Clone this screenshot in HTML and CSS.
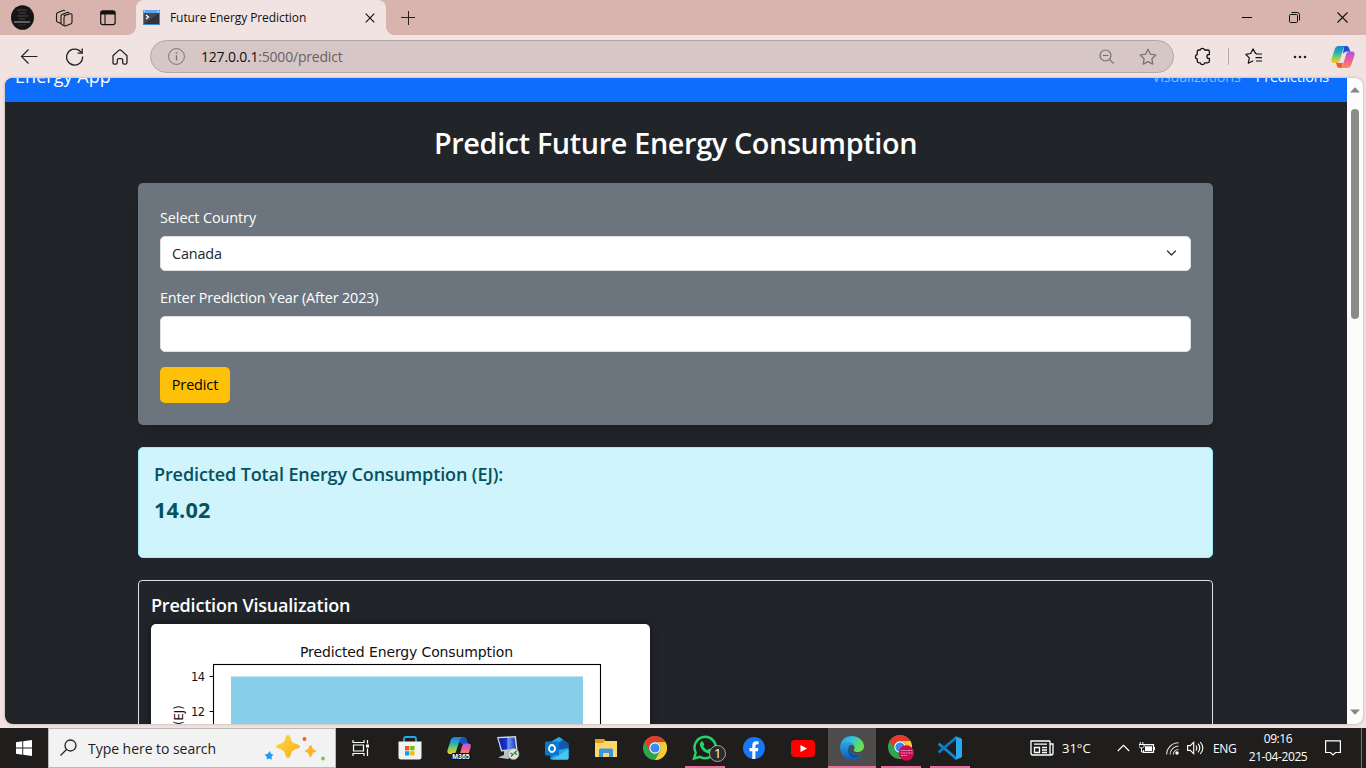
FILE: index.html
```html
<!DOCTYPE html>
<html lang="en">
<head>
<meta charset="utf-8">
<title>Future Energy Prediction</title>
<link rel="stylesheet" href="styles.css">
</head>
<body>
<svg class="defs" width="0" height="0" aria-hidden="true">
  <defs>
    <linearGradient id="coA" x1="0" y1="0" x2="0" y2="1"><stop offset="0" stop-color="#1683dd"/><stop offset=".4" stop-color="#28b4b5"/><stop offset=".7" stop-color="#8ed052"/><stop offset="1" stop-color="#ffc526"/></linearGradient>
    <linearGradient id="coB" x1="0" y1="0" x2="0" y2="1"><stop offset="0" stop-color="#a45cf0"/><stop offset=".5" stop-color="#ee5b9c"/><stop offset="1" stop-color="#ff8a53"/></linearGradient>
    <linearGradient id="edgeA" x1="0" y1="0" x2="1" y2=".4"><stop offset="0" stop-color="#1b9de0"/><stop offset=".5" stop-color="#32c4da"/><stop offset="1" stop-color="#6be04c"/></linearGradient>
    <linearGradient id="edgeB" x1="0" y1="0" x2="0" y2="1"><stop offset="0" stop-color="#2aa9e4"/><stop offset="1" stop-color="#1158b2"/></linearGradient>
    <linearGradient id="starG" x1="0" y1="0" x2="1" y2="1"><stop offset="0" stop-color="#ffd94a"/><stop offset="1" stop-color="#f8ac14"/></linearGradient>
    <linearGradient id="monG" x1="0" y1="0" x2="1" y2="0"><stop offset="0" stop-color="#0a1eb0"/><stop offset=".45" stop-color="#1a35c8"/><stop offset=".55" stop-color="#6f9af2"/><stop offset="1" stop-color="#1a3ac8"/></linearGradient>
    <symbol id="copilot" viewBox="0 0 24 22">
      <path d="M13 0h2.500c1.500 0 2.300.9 2.700 2.400L19.300 6h-2.600c-2 0-2.900.8-3.500 2.700l-2 6z" fill="#1f4fd0"/>
      <path d="M7.500 0H15c-1.500 0-2.200 1-2.800 3L9 14.500c-.5 1.600-1.500 2.500-3.200 2.500H3C.5 17 0 15 .5 13.200L3.600 3.500C4.300 1.200 5.500 0 7.500 0z" fill="url(#coA)"/>
      <path d="M11 22H8.500c-1.500 0-2.300-.9-2.700-2.400L4.900 16.800h2.600c2 0 2.700-1 3.300-2.900l2-6z" fill="#ee5a30"/>
      <path d="M16.500 22H9c1.500 0 2.200-1 2.800-3L15 8c.5-1.600 1.500-2.500 3.200-2.500H21c2.500 0 3 2 2.500 3.800l-3.100 9.200C19.700 20.800 18.500 22 16.500 22z" fill="url(#coB)"/>
      <path class="copilot-gap" d="M13.200 6.800q.5-1.300 2.600-1.300h2.400Q15.800 5.700 15 8l-2.300 7.700q-.5 1.300-2.700 1.300H6Q8.200 17 9 14.500l1.700-5.700z"/>
    </symbol>
    <symbol id="copilot-m365" viewBox="0 0 24 22">
      <path d="M14 0h3q2 0 2.700 2.500L21 7h-6l-3-2z" fill="#1b4fc8"/>
      <path d="M7.500 0H16q-2.500.5-3.400 3.500L9 14.500C8.500 16.100 7.500 17 5.800 17H3C.5 17 0 15 .5 13.200L3.600 3.500C4.300 1.200 5.500 0 7.500 0z" fill="url(#coA)"/>
      <path d="M16.500 6.500H21q3.500 0 2.700 3.500L21.500 17H13l2-8z" fill="url(#coB)"/>
    </symbol>
    <symbol id="chrome" viewBox="0 0 24 24">
      <circle cx="12" cy="12" r="12" fill="#2da44e"/>
      <path d="M1.600 6a12 12 0 0 1 20.800 0H12a6 6 0 0 0-5.200 9z" fill="#e33b2e"/>
      <path d="M22.400 6A12 12 0 0 1 12 24l5.200-9A6 6 0 0 0 12 6z" fill="#fcc934"/>
      <circle cx="12" cy="12" r="5.700" fill="#fff"/><circle cx="12" cy="12" r="4.600" fill="#4285f4"/>
    </symbol>
  </defs>
</svg>

<div class="screen">
  <header class="tabstrip">
    <svg class="avatar" width="24" height="26" viewBox="0 0 24 26"><ellipse cx="12.500" cy="12.500" rx="11.500" ry="12.300" fill="#151515"/><path d="M7 5h10M9 8h7M7 11h11M9 14h6" stroke="#484848" stroke-width="1"/><path d="M4 17h16" stroke="#8a8a8a" stroke-width="1.300"/><path d="M8 20h8" stroke="#333"/></svg>
    <svg class="workspaces" width="18" height="18" viewBox="0 0 18 18" fill="none" stroke="#1a1a1a" stroke-width="1.100" stroke-linejoin="round"><path d="M8.600 6.600 15.500 4.800q1.500-.4 1.500 1.200v7q0 1.200-1 1.700l-5.500 2.200q-1.500.4-1.500-1V8.800q0-1 1-1.300"/><path d="M9 16.500l-2-.8q-1-.4-1-1.600V7.200q0-1.300 1-1.700l5-2q1.500-.4 2 .8"/><path d="M6 14.500l-3.500-1.500q-1-.5-1-1.500V5.500q0-1.300 1-1.700l5.500-2.400q1.200-.4 1.800.7"/></svg>
    <svg class="vertical-tabs" width="16" height="16" viewBox="0 0 16 16" fill="none"><rect x=".7" y=".9" width="14.400" height="13.800" rx="2.200" stroke="#111" stroke-width="1.200"/><path d="M.7 4.500V3Q.7.9 3 .9h10q2.100 0 2.100 2.100v1.500z" fill="#111"/><path d="M5 4v10.500" stroke="#111" stroke-width="1.100"/></svg>
    <div class="tab">
      <svg width="17" height="15" viewBox="0 0 17 15"><rect width="17" height="15" fill="#4285cc"/><rect width="17" height="3" fill="#5fa5ef"/><path d="M1 1.500h1m12 0h2" stroke="#c9ddfa"/><rect x="1" y="3" width="15" height="11" fill="#303338"/><path d="M1 14V3h15z" fill="#474a50"/><path d="m3 5 2.500 2L3 9" fill="none" stroke="#fff" stroke-width="1.300"/></svg>
      <span class="tab-title">Future Energy Prediction</span>
      <svg class="tab-close" width="10" height="10" viewBox="0 0 10 10"><path d="m.7.7 8.600 8.600M9.300.7.700 9.300" stroke="#111" stroke-width="1.200"/></svg>
    </div>
    <svg class="new-tab" width="14" height="14" viewBox="0 0 14 14"><path d="M7.500 0v14M0 6.500h14" stroke="#222"/></svg>
    <div class="window-buttons">
      <svg width="10" height="12" viewBox="0 0 10 12"><path d="M0 5.500h10" stroke="#000"/></svg>
      <svg width="11" height="11" viewBox="0 0 11 11" fill="none" stroke="#111"><rect x=".5" y="2.500" width="8" height="8" rx="1.200"/><path d="M2.500.5H8.200q2.300 0 2.300 2.300v5.700"/></svg>
      <svg width="11" height="11" viewBox="0 0 11 11"><path d="m.5.5 10 10m0-10-10 10" stroke="#111" stroke-width="1.100"/></svg>
    </div>
  </header>

  <div class="toolbar">
    <div class="nav-icons">
      <svg width="18" height="16" viewBox="0 0 18 16" fill="none" stroke="#222" stroke-width="1.200"><path d="M17.500 7.500H1.700M8.500 .5l-7 7 7 7"/></svg>
      <svg width="18" height="18" viewBox="0 0 18 18" fill="none" stroke="#222" stroke-width="1.300"><path d="M16.600 8.500A8 8 0 1 1 13 2.400l3 2.300"/><path d="M16.200.5v4.600h-4.600"/></svg>
      <svg width="16" height="16" viewBox="0 0 16 16" fill="none" stroke="#222" stroke-width="1.300" stroke-linejoin="round"><path d="M1 6.800 6.700 1.400q1.300-1.100 2.600 0L15 6.800v6.700q0 1.700-1.700 1.700h-1.100q-1.500 0-1.500-1.600v-2.400q0-1.500-1.400-1.500H6.700q-1.400 0-1.400 1.500v2.400q0 1.600-1.500 1.600H2.700Q1 15.200 1 13.500z"/></svg>
    </div>
    <div class="address">
      <svg width="17" height="17" viewBox="0 0 17 17" fill="none" stroke="#777071"><circle cx="8.500" cy="8.500" r="7.900"/><path d="M8.500 7.300V12.500" stroke-width="1.300"/><path d="M8.500 4.300v1.400" stroke-width="1.500"/></svg>
      <span class="url">127.0.0.1<span>:5000/predict</span></span>
      <svg class="zoom-icon" width="16" height="16" viewBox="0 0 16 16" fill="none" stroke="#777071" stroke-width="1.200"><circle cx="6.500" cy="6.500" r="5.500"/><path d="M3.700 6.500h5.600M10.500 10.500l4.200 4.200"/></svg>
      <svg width="18" height="18" viewBox="0 0 18 18" fill="none" stroke="#777071" stroke-width="1.200" stroke-linejoin="round"><path d="m9 1.300 2.400 4.900 5.400.8-3.900 3.800.9 5.300L9 13.600l-4.800 2.500.9-5.300L1.200 7l5.400-.8z"/></svg>
    </div>
    <div class="extensions">
      <svg width="18" height="19" viewBox="0 0 18 19" fill="none" stroke="#111" stroke-width="1.300" stroke-linejoin="round"><path d="M6.200 3a2.300 2.300 0 0 1 4.400 0h3q1.800 0 1.800 1.800v2.700h-.6a1.900 1.900 0 0 0 0 3.800h.6v2.800q0 1.800-1.800 1.800h-3a2.200 2.200 0 0 1-4.300 0H5Q3.200 15.900 3.200 14.100V12A2.300 2.300 0 0 1 3.200 7.500V4.800Q3.200 3 5 3z"/></svg>
      <i class="divider"></i>
      <svg width="18" height="17" viewBox="0 0 18 17" fill="none" stroke="#111" stroke-width="1.200" stroke-linejoin="round"><path d="m11.700 5.500-1.200-.1L8 .9 5.700 5.500.8 6.300l3.500 3.500-1 5.400 5-2.400"/><path d="M11 6h6M10.500 9.600H17M11 13h6"/></svg>
      <svg width="14" height="4" viewBox="0 0 14 4" fill="#222"><circle cx="2" cy="2" r="1.300"/><circle cx="7" cy="2" r="1.300"/><circle cx="12" cy="2" r="1.300"/></svg>
      <svg width="24" height="22"><use href="#copilot"/></svg>
    </div>
  </div>

  <div class="viewport">
    <div class="page">
      <nav class="navbar">
        <span class="brand">Energy App</span>
        <span class="nav-link">Visualizations</span>
        <span class="nav-link active">Predictions</span>
      </nav>
      <main class="container">
        <h2>Predict Future Energy Consumption</h2>
        <form class="form-card">
          <label class="label-country">Select Country</label>
          <div class="select"><span>Canada</span><svg width="11" height="7" viewBox="0 0 11 7" fill="none" stroke="#343a40" stroke-width="1.400" stroke-linecap="round"><path d="m1.500 1 4 4 4-4"/></svg></div>
          <label class="label-year">Enter Prediction Year (After 2023)</label>
          <input class="year" type="text">
          <button class="predict" type="button">Predict</button>
        </form>
        <section class="alert">
          <h4>Predicted Total Energy Consumption (EJ):</h4>
          <p>14.02</p>
        </section>
        <section class="chart-card">
          <h4>Prediction Visualization</h4>
          <svg class="chart" width="499" height="374" viewBox="0 0 499 374">
            <rect width="499" height="374" fill="#fff"/>
            <rect x="80" y="52.500" width="352" height="290" fill="#87ceeb"/>
            <rect x="62.500" y="40.500" width="387" height="302" fill="none" stroke="#000" stroke-width="1.100"/>
            <path d="M58.500 52.500h4M58.500 87.500h4" stroke="#000" stroke-width="1.100"/>
            <text class="chart-title" x="149" y="33" textLength="213">Predicted Energy Consumption</text>
            <text class="tick" x="40" y="57" textLength="14">14</text>
            <text class="tick" x="40" y="92" textLength="14">12</text>
            <text class="axis" transform="translate(32 101) rotate(-90)">(EJ)</text>
          </svg>
        </section>
      </main>
    </div>
    <div class="scrollbar">
      <svg width="10" height="6" viewBox="0 0 10 6"><path d="M5 .3 10 5.500H0z" fill="#858585"/></svg>
      <div class="track"><div class="thumb"></div></div>
      <svg width="10" height="6" viewBox="0 0 10 6"><path d="M5 5.700 10 .5H0z" fill="#858585"/></svg>
    </div>
  </div>

  <footer class="taskbar">
    <div class="start"><svg width="16" height="16" viewBox="0 0 16 16" fill="#fff"><path d="M0 2.200 6.300 1.300V7.500H0zM7.200 1.200 16 0v7.500H7.200zM0 8.400h6.300v6.300L0 13.800zM7.200 8.400H16V16l-8.800-1.200z"/></svg></div>
    <div class="search">
      <svg width="18" height="18" viewBox="0 0 18 18" fill="none" stroke="#222" stroke-width="1.300"><circle cx="10.500" cy="6.500" r="5.500"/><path d="M6.500 10.500.5 16.500"/></svg>
      <span>Type here to search</span>
      <svg class="sparkles" width="62" height="28" viewBox="0 0 62 28"><path d="M24 1q2 0 3 4.500 1 3.500 5 4.500 4 1 4 2.500t-4 2.500q-4 1-5 4.500-1 4.500-3 4.500t-3-4.500q-1-3.500-5-4.500-4-1-4-2.500t4-2.500q4-1 5-4.500Q22 1 24 1z" fill="url(#starG)"/><path d="M46.500 11q1.200 0 1.700 2.500.6 1.700 2.300 2.200 1.700.5 1.700 1.300t-1.700 1.300q-1.700.5-2.300 2.200-.5 2.500-1.700 2.500t-1.700-2.500q-.6-1.700-2.300-2.200-1.700-.5-1.700-1.300t1.700-1.300q1.700-.5 2.300-2.200.5-2.500 1.700-2.500z" fill="#fbb62a"/><path d="m6 17 .8 2.700 2.700.8-2 2 .5 2.900-2.700-.8-2.300 1-.3-2.800L.5 20.500l3-.6z" fill="#199ef0"/><circle cx="40.500" cy="5" r="2" fill="#ef6530"/><circle cx="59" cy="24.500" r="2" fill="#87c44b"/></svg>
    </div>
    <div class="apps">
      <div class="app"><svg width="18" height="18" viewBox="0 0 18 18" fill="none" stroke="#fff" stroke-width="1.200"><path d="M1 1v2.500h11V1M1 17v-2.500h11V17M1.500 6h10v6h-10zM15.500 1v3.500m0 5V17"/><path d="M14 5.500h3v3h-3z" fill="#fff" stroke="none"/></svg></div>
      <div class="app"><svg width="24" height="24" viewBox="0 0 24 24"><path d="M6 7V3q0-2 2-2h8q2 0 2 2v4" fill="none" stroke="#27a8e0" stroke-width="1.800"/><path d="M.5 5.500h23V21q0 2.500-2.500 2.500H3Q.5 23.500.5 21z" fill="#f3f3f3"/><path d="M7 10h4.300v4.300H7z" fill="#f25022"/><path d="M12.200 10h4.300v4.300h-4.300z" fill="#7fba00"/><path d="M7 15.200h4.300v4.300H7z" fill="#00a4ef"/><path d="M12.200 15.200h4.300v4.300h-4.300z" fill="#ffb900"/></svg></div>
      <div class="app m365"><svg width="24" height="22"><use href="#copilot-m365"/></svg><span>M365</span></div>
      <div class="app"><svg width="24" height="26" viewBox="0 0 24 26"><path d="m1 2 19-1 1.500 14L5 16.500z" fill="#d6dae0"/><path d="m2.500 3.300 16.200-.9 1.300 11.300L6 15z" fill="url(#monG)"/><path d="m8 16 5-1 1 4 3 1.500-5 3.500-10-1.500 6-2.500z" fill="#bcc2c8"/><circle cx="17.500" cy="19" r="5.500" fill="#e0e3e0" stroke="#8d9593" stroke-width=".7"/><path d="m14.500 18 2.500 1.500-2 2M20.500 16l-2 2 2.500 1.500" fill="none" stroke="#26843a" stroke-width="1.400"/></svg></div>
      <div class="app"><svg width="24" height="24" viewBox="0 0 24 24"><path d="M4 7 14 1l9.500 6.500V22q0 1.500-1.500 1.500H7Q5 23.500 5 21.500z" fill="#0f6ab9"/><path d="M4 7 14 1l4 2.500-10 7z" fill="#2fa5e4"/><path d="m14 8 5-4 4.500 3.500v5L16 17z" fill="#1459a6"/><path d="m5 23 9-9 9.500-2V22q0 1.500-1.500 1.500H7z" fill="#28a8ea"/><path d="m7 23.500 16.500-10V22q0 1.500-1.500 1.500z" fill="#46c8ef"/><rect y="5.500" width="14" height="14" rx="1.200" fill="#0878d3"/><ellipse cx="7" cy="12.500" rx="3" ry="3.500" fill="none" stroke="#fff" stroke-width="1.800"/></svg></div>
      <div class="app"><svg width="22" height="20" viewBox="0 0 22 20"><path d="M0 1h9l1.500 2H22v16H0z" fill="#dfa11b"/><path d="M0 5h8l2-2h12v16H0z" fill="#ffd767"/><path d="M4 19v-7q0-1.500 1.500-1.500h11q1.500 0 1.500 1.500v7h-4v-4H8v4z" fill="#3d95db"/></svg></div>
      <div class="app"><svg width="24" height="24"><use href="#chrome"/></svg></div>
      <div class="app running"><svg class="whatsapp" width="34" height="28" viewBox="0 0 34 28"><path d="m2 24.500 1.700-6A10.700 10.700 0 1 1 8 22.900z" fill="#1f1e1d" stroke="#25d366" stroke-width="2.400"/><path d="M9 7.800q1.200-1.200 2 0l1.200 2.400q.3.700-1 2 1.500 2.700 4.400 3.800 1.200-1.600 1.900-1.200l2.300 1.200q.8.300.2 1.700-1 2.200-3.800 1.700-6.300-1.600-8.300-7.900-.3-2.200 1.100-3.700z" fill="#25d366"/><circle cx="25.500" cy="19.500" r="8" fill="#2c2b29" stroke="#a6a6a6"/><text class="badge-number" x="22" y="24">1</text></svg></div>
      <div class="app"><svg width="22" height="22" viewBox="0 0 22 22"><circle cx="11" cy="11" r="11" fill="#1877f2"/><path d="M9.300 22v-7.800H6.500V11h2.800V8.600q0-4.300 4.100-4.300l2.200.2v2.800H14q-1.600 0-1.600 1.600V11h3l-.5 3.200h-2.500V22z" fill="#fff"/></svg></div>
      <div class="app"><svg width="24" height="17" viewBox="0 0 24 17"><rect width="24" height="17" rx="4" fill="#f00"/><path d="m9.500 5 6.500 3.500L9.500 12z" fill="#fff"/></svg></div>
      <div class="app running current"><svg width="24" height="24" viewBox="0 0 24 24"><path d="M0 12Q1 0 12 0q10 .5 12 9.500.3 6-6 6.500-5 0-4-2.500 2-3-2-5Q6 6 0 12z" fill="url(#edgeA)"/><path d="M0 12q1-6.500 7.500-6.500Q14 6 14.700 11q-.2-2.800-3.200-2.200-3.500 1.700-2 6Q12 20 20 18.500q2-.7 1.700.3Q18 24 11.800 24 1 23 0 12z" fill="url(#edgeB)"/><path d="M9 10q-3 7 2.500 11 4.500 2.500 9.500-2.500-8 2.500-11-2.500-1.700-3.500.5-6.500z" fill="#0c4ea5"/></svg></div>
      <div class="app running"><svg width="26" height="26" viewBox="0 0 26 26"><svg width="24" height="24"><use href="#chrome"/></svg><circle cx="18.300" cy="18" r="7.700" fill="#c80d55"/><path d="M12.500 15.500h12M12.500 18h12M13 20.500h6" stroke="#e88bac" stroke-width="1.200" stroke-dasharray="2 .5"/></svg></div>
      <div class="app running"><svg width="24" height="24" viewBox="0 0 24 24"><path d="M1.500 6.500 18 20.500V24L.3 9.200Q-.3 8.500.4 7.800z" fill="#1783c9"/><path d="M1.500 17.500 18 3.500V0L.3 14.800q-.6.700.1 1.400z" fill="#087bc5"/><path d="m17 0 5.800 2.300q1.200.5 1.200 1.700v16q0 1.200-1.200 1.700L17 24q1-.5 1-2V2q0-1.500-1-2z" fill="#29a8f2"/></svg></div>
    </div>
    <div class="tray">
      <svg class="news" width="24" height="16" viewBox="0 0 24 16" fill="none" stroke="#fff" stroke-width="1.300"><path d="M20 1H1v12q0 2 2 2h18q2 0 2-2V4h-3v9q0 1.500 1.500 1.500M20 1v4"/><path d="M4 4.200h13M12 7.500h5M12 10h5M12 12.500h5"/><path d="M4.500 7.500h5v5h-5z"/></svg>
      <span class="temp">31°C</span>
      <svg class="chevron" width="13" height="8" viewBox="0 0 13 8"><path d="m.8 7 5.700-5.700L12.200 7" fill="none" stroke="#fff" stroke-width="1.200"/></svg>
      <svg class="battery" width="16" height="12" viewBox="0 0 16 12"><path d="M5 2.700h9.500v7.600H4.500V8" fill="none" stroke="#fff" stroke-width="1.200"/><path d="M6 4.200h7V9H6zM15 5h1v3h-1z" fill="#fff"/><path d="M1.200 0v2M3.800 0v2M0 2.500h5V4.500L3.500 6h-2L0 4.500zM2.500 6v4H5" stroke="#fff" fill="none"/></svg>
      <svg class="wifi" width="13" height="13" viewBox="0 0 13 13" fill="none" stroke="#ddd" stroke-width="1.100"><path d="M.6 12.500A12 12 0 0 1 12.500.8M4 12.500A8.700 8.700 0 0 1 12.500 4M7.200 12.500a5.500 5.500 0 0 1 5.300-5"/><circle cx="11" cy="11" r="1.700" fill="#fff" stroke="none"/></svg>
      <svg class="volume" width="17" height="14" viewBox="0 0 17 14" fill="none" stroke="#fff" stroke-width="1.100"><path d="M.6 4.600h2.700L6.700 1.300v11.400L3.300 9.400H.6zM8.800 4.500q2 2.500 0 5M11 2.700q3.500 4.300 0 8.600M13.300 1q5 6 0 12"/></svg>
      <span class="lang">ENG</span>
      <div class="clock"><span>09:16</span><span>21-04-2025</span></div>
      <svg class="notify" width="16" height="16" viewBox="0 0 16 16" fill="none" stroke="#fff" stroke-width="1.200"><path d="M.6.8h14.800v11.700H10.500L8 15l-2.500-2.500H.6z"/></svg>
      <i class="desktop-edge"></i>
    </div>
  </footer>
</div>
</body>
</html>
```
FILE: styles.css
```css
* { box-sizing: border-box; }
body { margin: 0; overflow: hidden; font-family: "Open Sans", "Noto Sans", sans-serif; }
svg { display: block; flex: none; }
.defs { position: absolute; }
h2, h4, p { margin: 0; }
span, h2, h4, p, label, button { white-space: nowrap; }
.screen { width: 1366px; height: 768px; display: flex; flex-direction: column; background: #f1e3e1; }

.tabstrip { height: 35px; flex: none; display: flex; align-items: center; background: #d9b3ad; }
.avatar { margin-left: 10px; }
.workspaces { margin-left: 21px; }
.vertical-tabs { margin-left: 27px; }
.tab { width: 250px; height: 35px; margin-left: 20px; padding: 0 11px 0 7px; display: flex; align-items: center; background: #f1e3e1; border-radius: 8px 8px 0 0; position: relative; }
.tab::before, .tab::after { content: ""; position: absolute; bottom: 0; width: 8px; height: 8px; }
.tab::before { left: -8px; background: radial-gradient(circle at 0 0, #d9b3ad 7.5px, #f1e3e1 8px); }
.tab::after { right: -8px; background: radial-gradient(circle at 100% 0, #d9b3ad 7.5px, #f1e3e1 8px); }
.tab-title { margin-left: 10px; font-size: 12px; letter-spacing: -.08px; color: #111; }
.tab-close { margin-left: auto; }
.new-tab { margin-left: 15px; }
.window-buttons { margin-left: auto; padding-right: 18px; display: flex; align-items: center; gap: 37px; }

.toolbar { height: 43px; flex: none; display: flex; align-items: center; }
.nav-icons { display: flex; align-items: center; width: 150px; padding-left: 20px; gap: 28px; }
.address { width: 1024px; height: 33px; display: flex; align-items: center; padding: 0 16px 0 17px; border: 1px solid #b5a5a4; border-radius: 17px; background: #d6c7c6; }
.url { margin-left: 16px; font-size: 14px; letter-spacing: -.2px; color: #111; }
.url span { color: #696263; }
.zoom-icon { margin-left: auto; margin-right: 24px; }
.extensions { flex: 1; display: flex; align-items: center; padding-left: 20px; }
.divider { width: 1px; height: 17px; margin: 0 16px; background: #b7a9a8; }
.extensions svg:nth-of-type(3) { margin: 0 24px 0 30px; }
.copilot-gap { fill: #f1e3e1; }

.viewport { width: 1358px; height: 646px; flex: none; margin-left: 5px; display: flex; overflow: hidden; border-radius: 8px; background: #fcfcfc; box-shadow: 0 0 3px #b9a5a3; }
.page { width: 1342px; height: 646px; overflow: hidden; background: #212529; }
.navbar { height: 51px; margin-top: -27px; padding: 0 18px 0 10px; display: flex; align-items: center; background: #0d6efd; color: #fff; }
.brand { margin-right: auto; padding-bottom: 2px; font-size: 18px; letter-spacing: .05px; }
.nav-link { font-size: 14.4px; letter-spacing: -.16px; margin-left: 15px; color: #86b7fe; }
.nav-link.active { color: #fff; }
.container { width: 1075px; margin-left: 133px; }
h2 { height: 81px; line-height: 81px; text-align: center; color: #fff; font-size: 28.8px; font-weight: 600; letter-spacing: -.36px; }
.form-card { height: 242px; padding: 22px; display: flex; flex-direction: column; align-items: stretch; background: #6c757d; border-radius: 5px; box-shadow: 0 7px 14px rgba(0,0,0,.15); color: #fff; }
.form-card label { height: 31px; line-height: 25px; font-size: 14.4px; letter-spacing: -.15px; }
.form-card .label-country { letter-spacing: -.07px; }
.label-year { margin-top: 14px; }
.select { height: 35px; padding: 0 13px 0 11px; display: flex; align-items: center; justify-content: space-between; background: #fff; border: 1px solid #dee2e6; border-radius: 5px; color: #212529; font-size: 14.4px; letter-spacing: -.15px; }
.year { height: 36px; border: 1px solid #dee2e6; border-radius: 5px; background: #fff; }
.predict { width: 70px; height: 36px; margin-top: 15px; padding: 0 0 2px; border: 0; border-radius: 5px; background: #ffc107; color: #000; font: 14.4px "Open Sans", sans-serif; letter-spacing: -.1px; }
.alert { height: 111px; margin-top: 22px; padding: 14px 15px; border: 1px solid #9eeaf9; border-radius: 5px; background: #cff4fc; color: #055160; }
.alert h4 { height: 24px; line-height: 24px; font-size: 18px; font-weight: 600; letter-spacing: -.11px; }
.alert p { margin-top: 8px; line-height: 32px; font-size: 21.6px; font-weight: 700; letter-spacing: .2px; }
.chart-card { height: 440px; margin-top: 22px; padding: 12px; border: 1px solid #dee2e6; border-radius: 4px; color: #fff; }
.chart-card h4 { height: 31px; line-height: 25px; font-size: 18px; font-weight: 600; letter-spacing: -.2px; }
.chart { border-radius: 5px; box-shadow: 0 0 8px rgba(0,0,0,.5); }
.chart text { font-family: "DejaVu Sans", sans-serif; fill: #111; }
.chart-title { font-size: 14px; }
.chart .tick, .chart .axis { font-size: 11.5px; }
.scrollbar { width: 16px; display: flex; flex-direction: column; align-items: center; padding: 9px 0; }
.track { flex: 1; padding-top: 16px; }
.thumb { width: 8px; height: 210px; background: #8b8b8b; border-radius: 4px; }

.taskbar { height: 40px; margin-top: 4px; flex: none; display: flex; background: #1f1e1c; color: #fff; }
.start { width: 48px; display: flex; align-items: center; justify-content: center; }
.search { width: 288px; display: flex; align-items: center; padding: 0 9px 0 11px; background: #f2f2f2; border: 1px solid #b8b8b8; color: #222; font-size: 14px; letter-spacing: -.04px; }
.search span { margin-left: 10px; }
.sparkles { margin-left: auto; }
.apps { display: flex; padding-left: 1px; }
.app { width: 48px; margin-right: 1.08px; display: flex; align-items: center; justify-content: center; position: relative; }
.running::after { content: ""; position: absolute; left: 4px; bottom: 0; width: 40px; height: 2px; background: #e5709b; }
.current { background: #4d4c4b; }
.current::after { left: 0; width: 48px; }
.m365 span { position: absolute; left: 17px; top: 25px; width: 19px; height: 7px; background: #111; font: bold 7px/7px "Liberation Sans", sans-serif; }
.whatsapp { margin-left: 9px; }
.badge-number { font: 13px "Open Sans", sans-serif; fill: #fff; }
.tray { margin-left: auto; display: flex; align-items: center; font-size: 12px; }
.temp { width: 30px; margin-left: 8px; font-size: 13px; }
.chevron { margin-left: 25px; }
.battery { margin-left: 9px; }
.wifi { margin-left: 11px; }
.volume { margin-left: 8px; }
.lang { width: 25px; margin-left: 9px; letter-spacing: -.3px; }
.clock { width: 60px; margin-left: 10px; display: flex; flex-direction: column; align-items: center; line-height: 18px; letter-spacing: -.4px; }
.notify { margin-left: 17px; }
.desktop-edge { width: 1px; height: 40px; margin: 0 4px 0 20px; background: #777; }
```
